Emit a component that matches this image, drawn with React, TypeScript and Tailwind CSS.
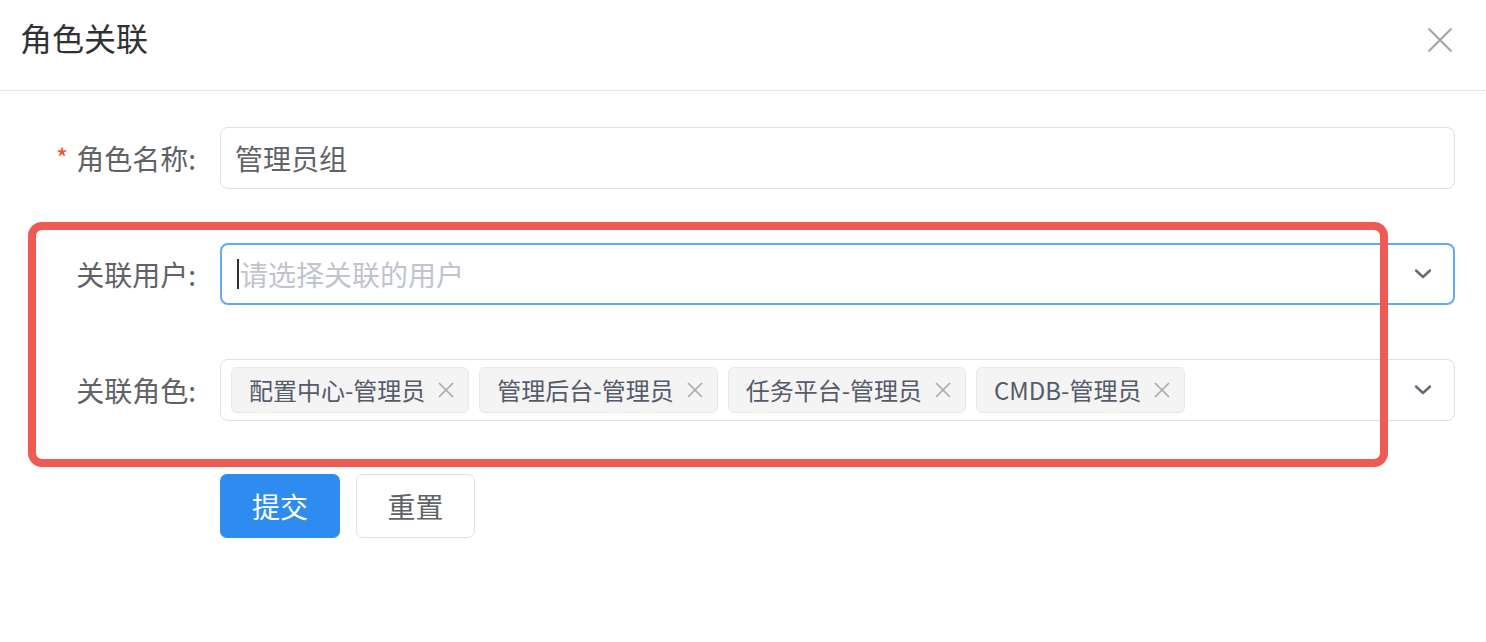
function Chevron() {
  return (
    <svg width="18" height="12" viewBox="0 0 18 12" fill="none" className="shrink-0">
      <path d="M2 2.5 L9 9 L16 2.5" stroke="#646b78" strokeWidth="2.4" strokeLinecap="round" strokeLinejoin="round" />
    </svg>
  );
}

function Tag({ text }: { text: string }) {
  return (
    <div className="h-[46px] flex items-center pl-[17px] pr-[14px] bg-[#f4f4f5] border border-[#e9e9eb] rounded-[6px] shrink-0">
      <span className="text-[24px] leading-[30px] text-[#555b68]">{text}</span>
      <svg width="16" height="16" viewBox="0 0 16 16" className="ml-[13px]">
        <path d="M1 1 L15 15 M15 1 L1 15" stroke="#a6a9ad" strokeWidth="1.6" />
      </svg>
    </div>
  );
}

export default function App() {
  const roles = ['配置中心-管理员', '管理后台-管理员', '任务平台-管理员', 'CMDB-管理员'];

  return (
    <div
      className="relative w-[1486px] h-[642px] bg-white overflow-hidden"
      style={{ fontFamily: '"Noto Sans CJK SC", "Noto Sans", sans-serif' }}
    >
      {/* Header */}
      <div className="h-[91px] border-b border-[#e4e7ed] flex justify-between items-start pl-[20px] pr-[33px] pt-[21px]">
        <h2 className="text-[32px] leading-[32px] text-[#303133]">角色关联</h2>
        <svg width="26" height="26" viewBox="0 0 26 26" className="mt-[6px]">
          <path d="M1.5 1.5 L24.5 24.5 M24.5 1.5 L1.5 24.5" stroke="#a0a3a8" strokeWidth="2" />
        </svg>
      </div>

      {/* Form */}
      <div className="pt-[36px] flex flex-col gap-[54px]">
        <div className="flex items-center">
          <label className="w-[220px] pr-[24px] flex items-center justify-end text-[28px] text-[#606266]">
            <span className="text-[#f4511e] text-[26px] leading-[26px] mr-[8px] -mt-[2px]">*</span>角色名称:
          </label>
          <div className="w-[1235px] h-[62px] border border-[#dcdfe6] rounded-[8px] flex items-center pl-[14px]">
            <span className="text-[28px] text-[#606266]">管理员组</span>
          </div>
        </div>

        <div className="flex items-center">
          <label className="w-[220px] pr-[24px] text-right text-[28px] text-[#606266]">关联用户:</label>
          <div className="w-[1235px] h-[62px] border-2 border-[#62a9f6] rounded-[8px] flex items-center pl-[15px] pr-[21px]">
            <span className="w-[2px] h-[30px] bg-[#303133] mr-[1px]" />
            <span className="flex-1 text-[28px] text-[#c0c4cc]">请选择关联的用户</span>
            <Chevron />
          </div>
        </div>

        <div className="flex items-center">
          <label className="w-[220px] pr-[24px] text-right text-[28px] text-[#606266]">关联角色:</label>
          <div className="w-[1235px] h-[62px] border border-[#dcdfe6] rounded-[8px] flex items-center pl-[10px] pr-[22px]">
            <div className="flex-1 flex items-center gap-[10px]">
              {roles.map((r) => (
                <Tag key={r} text={r} />
              ))}
            </div>
            <Chevron />
          </div>
        </div>

        <div className="flex items-center gap-[16px] pl-[220px] -mt-[1px]">
          <button className="w-[120px] h-[64px] rounded-[7px] bg-[#2e8cf0] text-white text-[28px]">提交</button>
          <button className="w-[119px] h-[64px] rounded-[7px] border border-[#dcdfe6] bg-white text-[#606266] text-[28px]">重置</button>
        </div>
      </div>

      {/* Annotation highlight */}
      <div className="absolute left-[28px] top-[222px] w-[1360px] h-[245px] border-[8px] border-[#ef5a55] rounded-[14px] pointer-events-none" />
    </div>
  );
}
